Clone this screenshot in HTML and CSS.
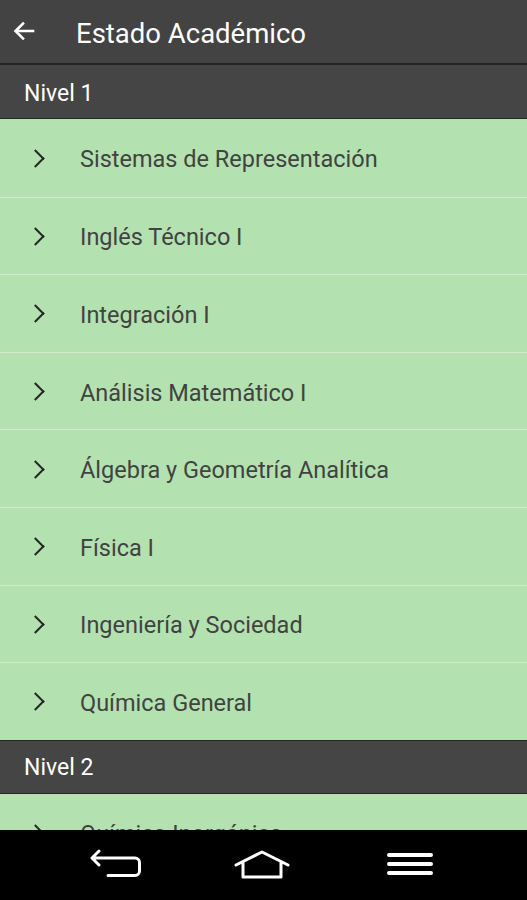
FILE: index.html
```html
<!DOCTYPE html>
<html lang="es">
<head>
    <meta charset="UTF-8">
    <meta name="viewport" content="width=device-width, initial-scale=1.0">
    <title>Estado Académico</title>
    <link rel="stylesheet" href="styles.css">
</head>
<body>

    <div class="screen">
        <!-- Toolbar -->
        <header class="app-bar">
            <svg class="back-icon" width="24" height="24" viewBox="0 0 24 24">
                <path d="M21 12H4.5M11 4.5L3.5 12L11 19.5" fill="none" stroke="#fff" stroke-width="2.6" stroke-linecap="square"/>
            </svg>
            <h1 class="app-title">Estado Académico</h1>
        </header>

        <main class="content">
            <div class="level-header">Nivel 1</div>
            <ul class="subject-list">
                <li class="subject"><span class="chevron"></span>Sistemas de Representación</li>
                <li class="subject"><span class="chevron"></span>Inglés Técnico I</li>
                <li class="subject"><span class="chevron"></span>Integración I</li>
                <li class="subject"><span class="chevron"></span>Análisis Matemático I</li>
                <li class="subject"><span class="chevron"></span>Álgebra y Geometría Analítica</li>
                <li class="subject"><span class="chevron"></span>Física I</li>
                <li class="subject"><span class="chevron"></span>Ingeniería y Sociedad</li>
                <li class="subject"><span class="chevron"></span>Química General</li>
            </ul>

            <div class="level-header level-header-next">Nivel 2</div>
            <ul class="subject-list">
                <li class="subject"><span class="chevron"></span>Química Inorgánica</li>
                <li class="subject"><span class="chevron"></span>Análisis Matemático II</li>
            </ul>
        </main>

        <!-- Android nav bar -->
        <nav class="nav-bar">
            <svg class="nav-back" width="56" height="32" viewBox="0 0 56 32">
                <path d="M4 9H47a4.5 4.5 0 0 1 4.5 4.5V22a4.5 4.5 0 0 1-4.5 4.5H20M11 2L4 9L11 16" fill="none" stroke="#fff" stroke-width="3" stroke-linejoin="round" stroke-linecap="round"/>
            </svg>
            <svg class="nav-home" width="58" height="32" viewBox="0 0 58 32">
                <path d="M3 16L29 3L55 16M10 13V28H48V13" fill="none" stroke="#fff" stroke-width="3" stroke-linejoin="round" stroke-linecap="round"/>
            </svg>
            <svg class="nav-menu" width="48" height="28" viewBox="0 0 48 28">
                <path d="M3 4H45M3 13H45M3 22H45" fill="none" stroke="#fff" stroke-width="4" stroke-linecap="round"/>
            </svg>
        </nav>
    </div>

</body>
</html>
```

FILE: styles.css
```css
* {
    box-sizing: border-box;
}
html, body {
    margin: 0;
    height: 100%;
}
body {
    font-family: Roboto, "Noto Sans", Arial, sans-serif;
    background-color: #b3e2b0;
    overflow: hidden;
}
.screen {
    display: flex;
    flex-direction: column;
    height: 900px;
}

/* Toolbar */
.app-bar {
    display: flex;
    align-items: center;
    height: 65px;
    flex-shrink: 0;
    padding: 3px 0 0 12px;
    background: #434343;
    border-bottom: 2px solid #232323;
}
.back-icon {
    flex-shrink: 0;
    margin-top: -4px;
}
.app-title {
    margin: 0 0 0 40px;
    font-size: 27.5px;
    font-weight: 400;
    color: #fff;
}

/* List */
.content {
    flex: 1;
    overflow: hidden;
}
.level-header {
    height: 54px;
    padding: 4px 0 0 24px;
    display: flex;
    align-items: center;
    font-size: 23px;
    color: #fff;
    background: #454545;
    border-bottom: 1px solid #262626;
}
.level-header-next {
    height: 54px;
    padding-top: 2px;
    border-top: 1px solid #262626;
}
.subject-list {
    list-style: none;
    margin: 0;
    padding: 0;
}
.subject {
    display: flex;
    align-items: center;
    height: 77.6px;
    padding: 3px 0 0 80px;
    font-size: 23.5px;
    color: #424242;
    background: #b3e2b0;
    border-top: 1.5px solid #d3ecd1;
    position: relative;
}
.subject-list .subject:first-child {
    border-top: none;
}
.chevron {
    position: absolute;
    left: 29px;
    top: 50%;
    width: 13px;
    height: 13px;
    margin-top: -6px;
    border-right: 2.5px solid #262626;
    border-top: 2.5px solid #262626;
    transform: rotate(45deg);
}

/* Android nav bar */
.nav-bar {
    height: 70px;
    flex-shrink: 0;
    background: #000;
    display: flex;
    align-items: center;
    padding: 0 0 1px 88px;
}
.nav-home {
    margin-left: 89px;
}
.nav-menu {
    margin-left: 95px;
}
```
